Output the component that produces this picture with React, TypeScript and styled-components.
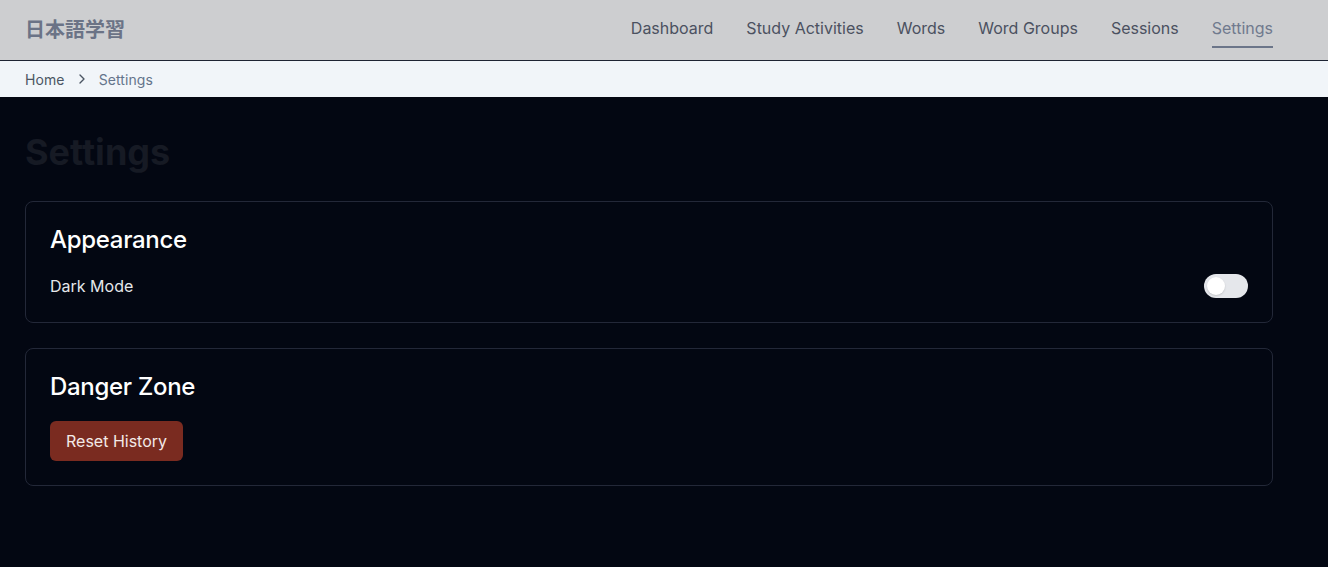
import React, { useState } from "react";
import styled, { createGlobalStyle } from "styled-components";

const GlobalStyle = createGlobalStyle`
  * { box-sizing: border-box; }
  html, body {
    margin: 0;
    padding: 0;
    background: #030712;
    font-family: "Inter", "Noto Sans CJK JP", sans-serif;
  }
`;

const navItems = [
  "Dashboard",
  "Study Activities",
  "Words",
  "Word Groups",
  "Sessions",
  "Settings",
];

export default function App() {
  const [dark, setDark] = useState(false);

  return (
    <>
      <GlobalStyle />
      <StyledHeader>
        <StyledLogo>日本語学習</StyledLogo>
        <StyledNav>
          {navItems.map((item) => (
            <StyledNavLink key={item} $active={item === "Settings"}>
              {item}
            </StyledNavLink>
          ))}
        </StyledNav>
      </StyledHeader>
      <StyledCrumbs>
        <StyledCrumb>Home</StyledCrumb>
        <svg width="16" height="16" viewBox="0 0 24 24" fill="none" stroke="#4b5563" strokeWidth="2" strokeLinecap="round" strokeLinejoin="round">
          <path d="m9 18 6-6-6-6" />
        </svg>
        <StyledCrumb $current>Settings</StyledCrumb>
      </StyledCrumbs>
      <StyledMain>
        <StyledTitle>Settings</StyledTitle>
        <StyledCard>
          <StyledCardTitle>Appearance</StyledCardTitle>
          <StyledRow>
            <StyledLabel>Dark Mode</StyledLabel>
            <StyledSwitch $on={dark} onClick={() => setDark(!dark)}>
              <StyledKnob $on={dark} />
            </StyledSwitch>
          </StyledRow>
        </StyledCard>
        <StyledCard>
          <StyledCardTitle>Danger Zone</StyledCardTitle>
          <StyledDangerButton>Reset History</StyledDangerButton>
        </StyledCard>
      </StyledMain>
    </>
  );
}

const StyledHeader = styled.header`
  height: 61px;
  background: #cdced0;
  border-bottom: 1px solid #1e2433;
  display: flex;
  align-items: center;
  justify-content: space-between;
  padding: 0 55px 0 25px;
`;

const StyledLogo = styled.div`
  font-size: 20px;
  line-height: 28px;
  font-weight: 700;
  color: #6b7386;
  font-family: "Noto Sans CJK JP", sans-serif;
  margin-top: -3px;
`;

const StyledNav = styled.nav`
  display: flex;
  align-items: center;
  gap: 33px;
`;

const StyledNavLink = styled.a<{ $active?: boolean }>`
  display: block;
  padding: 4px 0 6px;
  margin-bottom: 1px;
  font-size: 16px;
  line-height: 24px;
  color: ${(p) => (p.$active ? "#707a8e" : "#4b5160")};
  border-bottom: 2px solid ${(p) => (p.$active ? "#6b7589" : "transparent")};
  cursor: pointer;
`;

const StyledCrumbs = styled.div`
  height: 36px;
  background: #f1f5f9;
  display: flex;
  align-items: center;
  gap: 9px;
  padding: 0 25px;
`;

const StyledCrumb = styled.span<{ $current?: boolean }>`
  font-size: 14px;
  letter-spacing: 0.1px;
  color: ${(p) => (p.$current ? "#64748b" : "#4b5563")};
`;

const StyledMain = styled.main`
  width: 1248px;
  margin-left: 25px;
  padding-top: 31px;
  display: flex;
  flex-direction: column;
  gap: 25px;
`;

const StyledTitle = styled.h1`
  margin: 0;
  font-size: 36px;
  font-weight: 700;
  line-height: 48px;
  color: #161a24;
`;

const StyledCard = styled.section`
  border: 1px solid #232838;
  border-radius: 8px;
  padding: 24px;
  display: flex;
  flex-direction: column;
  align-items: flex-start;
  gap: 20px;
`;

const StyledCardTitle = styled.h2`
  margin: 0;
  font-size: 24px;
  font-weight: 500;
  line-height: 28px;
  color: #ffffff;
  letter-spacing: -0.3px;
`;

const StyledRow = styled.div`
  align-self: stretch;
  display: flex;
  align-items: center;
  justify-content: space-between;
`;

const StyledLabel = styled.span`
  font-size: 16px;
  color: #e5e7eb;
`;

const StyledSwitch = styled.button<{ $on: boolean }>`
  width: 44px;
  height: 24px;
  border-radius: 12px;
  border: none;
  padding: 0;
  background: ${(p) => (p.$on ? "#3b82f6" : "#e5e7eb")};
  display: flex;
  align-items: center;
  cursor: pointer;
`;

const StyledKnob = styled.span<{ $on: boolean }>`
  width: 18px;
  height: 18px;
  border-radius: 50%;
  background: #ffffff;
  margin-left: ${(p) => (p.$on ? "23px" : "3px")};
  box-shadow: 0 1px 2px rgba(0, 0, 0, 0.15);
`;

const StyledDangerButton = styled.button`
  height: 40px;
  padding: 0 16px;
  border: none;
  border-radius: 6px;
  background: #7a2b20;
  color: #f3e9e7;
  font-family: "Inter", sans-serif;
  font-size: 16px;
  cursor: pointer;
`;
